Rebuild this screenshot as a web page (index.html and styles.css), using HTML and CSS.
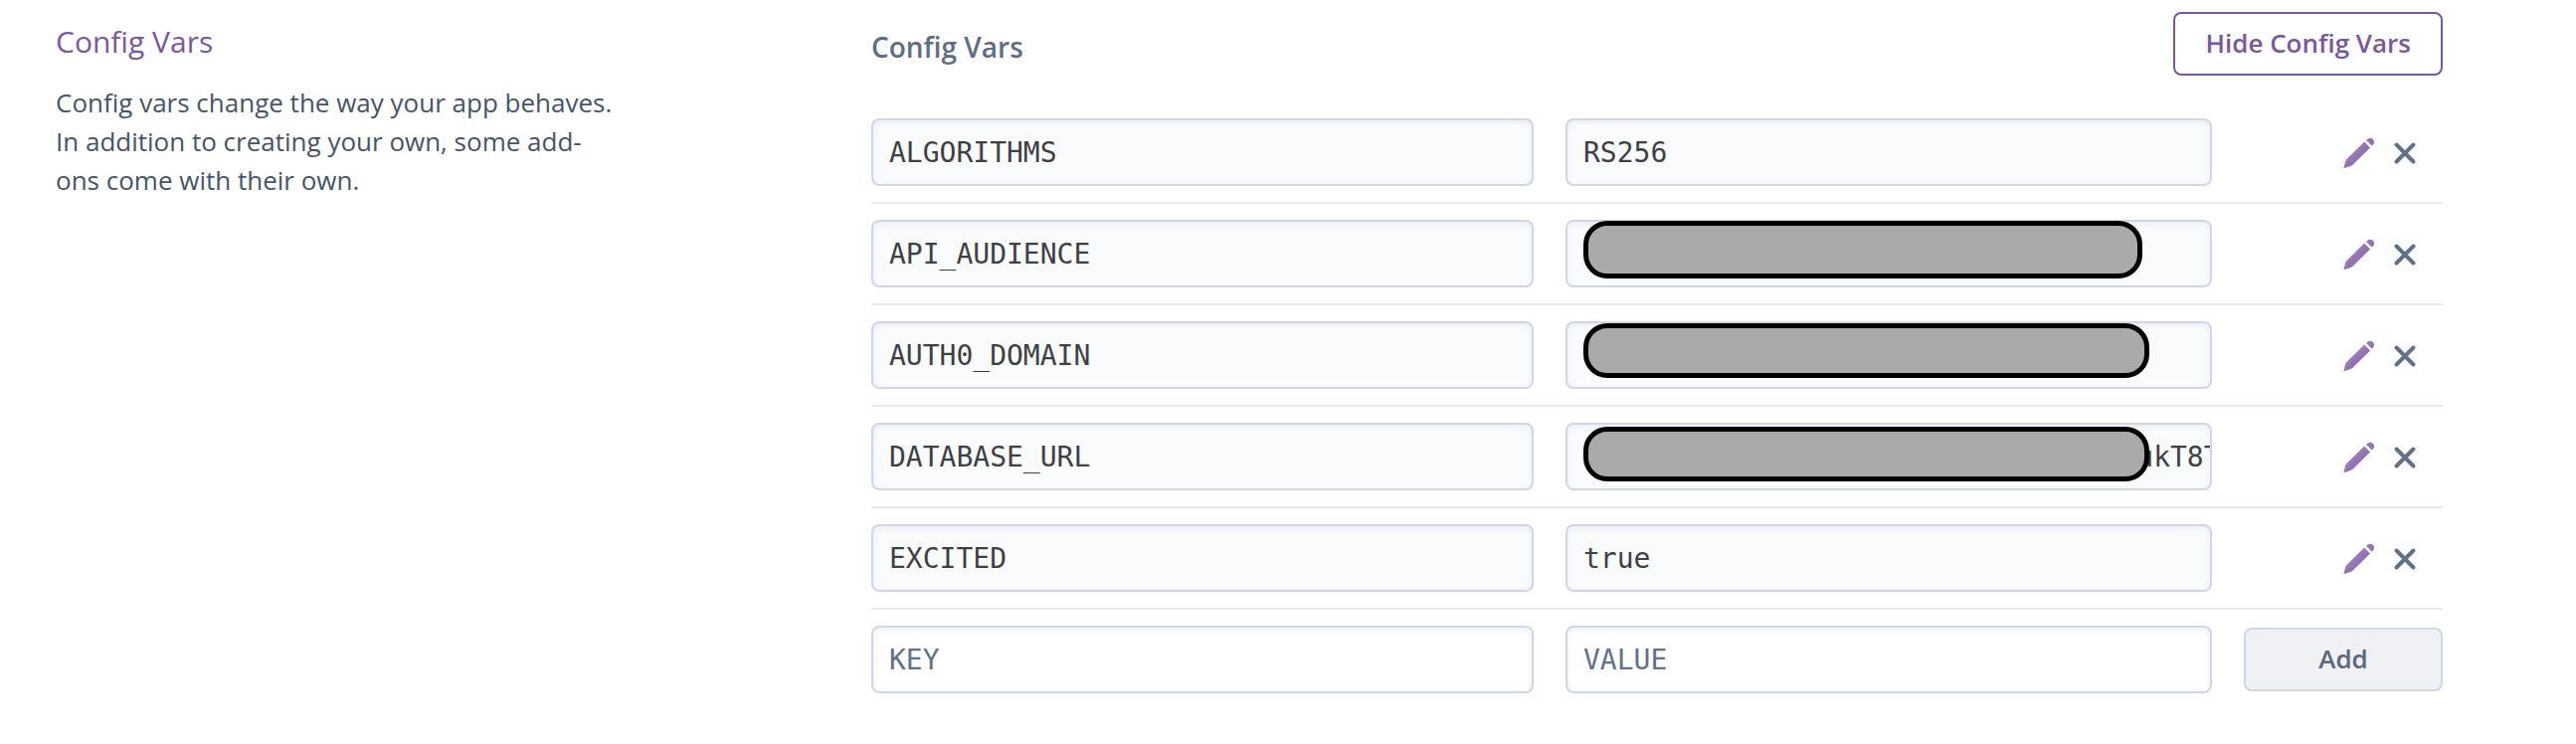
FILE: index.html
```html
<!DOCTYPE html>
<html lang="en">
<head>
<meta charset="utf-8">
<title>Config Vars</title>
<link rel="stylesheet" href="styles.css">
</head>
<body>
<svg class="defs" aria-hidden="true">
  <defs>
    <linearGradient id="pencil-fill" x1="0" y1="0" x2="1" y2="1">
      <stop offset="0.2" stop-color="#a48dc2"/>
      <stop offset="0.8" stop-color="#835ca6"/>
    </linearGradient>
    <symbol id="pencil" viewBox="0 0 32 32">
      <path fill="url(#pencil-fill)" d="M0.3 31.3 L2.600 22.800 L21.2 4.6 L27 10.400 L9.2 28 Q7.800 28.900 6 29.500Z M23 2.900 L25 1.200 Q27.600 -0.200 30 2 Q32 4.600 30.300 6.900 L28.700 8.600Z"/>
    </symbol>
    <symbol id="cross" viewBox="0 0 32 32">
      <path d="M7.500 7.500 L24.500 24.500 M24.500 7.500 L7.500 24.500" stroke="#62718a" stroke-width="4" stroke-linecap="round" fill="none"/>
    </symbol>
  </defs>
</svg>
<main class="page">
  <aside class="intro">
    <h1 class="intro-title">Config Vars</h1>
    <p class="intro-text">Config vars change the way your app behaves. In addition to creating your own, some add-ons come with their own.</p>
  </aside>
  <section class="vars">
    <header class="vars-header">
      <h2 class="vars-title">Config Vars</h2>
      <button class="button button-outline" type="button">Hide Config Vars</button>
    </header>
    <div class="row">
      <input class="field" type="text" aria-label="Key" value="ALGORITHMS" readonly>
      <div class="value"><input class="field" type="text" aria-label="Value" value="RS256" readonly></div>
      <div class="actions">
        <button class="icon-button" type="button" aria-label="Edit"><svg class="icon"><use href="#pencil"/></svg></button>
        <button class="icon-button" type="button" aria-label="Remove"><svg class="icon"><use href="#cross"/></svg></button>
      </div>
    </div>
    <div class="row">
      <input class="field" type="text" aria-label="Key" value="API_AUDIENCE" readonly>
      <div class="value"><input class="field" type="text" aria-label="Value" readonly><span class="mask mask-audience"></span></div>
      <div class="actions">
        <button class="icon-button" type="button" aria-label="Edit"><svg class="icon"><use href="#pencil"/></svg></button>
        <button class="icon-button" type="button" aria-label="Remove"><svg class="icon"><use href="#cross"/></svg></button>
      </div>
    </div>
    <div class="row">
      <input class="field" type="text" aria-label="Key" value="AUTH0_DOMAIN" readonly>
      <div class="value"><input class="field" type="text" aria-label="Value" readonly><span class="mask mask-domain"></span></div>
      <div class="actions">
        <button class="icon-button" type="button" aria-label="Edit"><svg class="icon"><use href="#pencil"/></svg></button>
        <button class="icon-button" type="button" aria-label="Remove"><svg class="icon"><use href="#cross"/></svg></button>
      </div>
    </div>
    <div class="row">
      <input class="field" type="text" aria-label="Key" value="DATABASE_URL" readonly>
      <div class="value"><input class="field" type="text" aria-label="Value" value="·································ukT8T" readonly><span class="mask mask-database"></span></div>
      <div class="actions">
        <button class="icon-button" type="button" aria-label="Edit"><svg class="icon"><use href="#pencil"/></svg></button>
        <button class="icon-button" type="button" aria-label="Remove"><svg class="icon"><use href="#cross"/></svg></button>
      </div>
    </div>
    <div class="row">
      <input class="field" type="text" aria-label="Key" value="EXCITED" readonly>
      <div class="value"><input class="field" type="text" aria-label="Value" value="true" readonly></div>
      <div class="actions">
        <button class="icon-button" type="button" aria-label="Edit"><svg class="icon"><use href="#pencil"/></svg></button>
        <button class="icon-button" type="button" aria-label="Remove"><svg class="icon"><use href="#cross"/></svg></button>
      </div>
    </div>
    <form class="row">
      <input class="field" type="text" aria-label="New key" placeholder="KEY">
      <div class="value"><input class="field" type="text" aria-label="New value" placeholder="VALUE"></div>
      <button class="button button-add" type="button">Add</button>
    </form>
  </section>
</main>
</body>
</html>
```
FILE: styles.css
```css
* {
  box-sizing: border-box;
}

body {
  margin: 0;
  background: #fff;
  color: #475468;
  font-family: "Open Sans", "Noto Sans", sans-serif;
  font-size: 26px;
}

.defs {
  position: absolute;
  width: 0;
  height: 0;
}

.page {
  display: grid;
  grid-template-columns: minmax(0, 820fr) minmax(0, 1580fr);
  padding: 12px 134px 36px 56px;
}

.intro {
  padding-top: 10px;
}

.intro-title {
  margin: 0 0 22px;
  color: #79589f;
  font-size: 30px;
  font-weight: 400;
  line-height: 40px;
}

.intro-text {
  max-width: 564px;
  margin: 0;
  line-height: 39px;
}

.vars-header {
  display: flex;
  align-items: center;
  justify-content: space-between;
  margin-bottom: 27px;
}

.vars-title {
  margin: 0;
  padding-top: 6px;
  color: #5e6d87;
  font-size: 28px;
  font-weight: 600;
  line-height: 40px;
}

.button {
  height: 64px;
  padding: 0 30px 2px;
  border: 2px solid;
  border-radius: 8px;
  font-family: inherit;
  font-size: 26px;
  font-weight: 600;
  line-height: 36px;
}

.button-outline {
  border-color: #79589f;
  background: #fff;
  color: #79589f;
}

.button-add {
  width: 100%;
  border-color: #cfd7e6;
  background: #eff1f5;
  color: #5a6880;
}

.row {
  display: grid;
  grid-template-columns: minmax(0, 666fr) minmax(0, 650fr) minmax(0, 200fr);
  align-items: center;
  gap: 32px;
  padding: 16px 0;
  border-bottom: 2px solid #e6eaf1;
}

.row:last-child {
  border-bottom: 0;
}

.value {
  position: relative;
}

.field {
  display: block;
  width: 100%;
  height: 68px;
  padding: 0 0 0 16px;
  border: 2px solid #cfd7e6;
  border-radius: 8px;
  outline: 0;
  background: #fff;
  box-shadow: inset 0 2px 6px #e9ecf3;
  color: #3f3f44;
  font-family: "DejaVu Sans Mono", monospace;
  font-size: 28px;
}

.field:read-only {
  background: #fafbfd;
}

.field::placeholder {
  color: #62718a;
  opacity: 1;
}

.mask {
  position: absolute;
  left: 18px;
  height: 55px;
  border: 5px solid #000;
  border-radius: 24px;
  background: #aaa;
}

.mask-audience {
  top: 1px;
  right: 70px;
  height: 58px;
}

.mask-domain {
  top: 2px;
  right: 63px;
}

.mask-database {
  top: 4px;
  right: 63px;
}

.actions {
  display: flex;
  justify-content: flex-end;
  gap: 14px;
  padding: 2px 22px 0 0;
}

.icon-button {
  padding: 0;
  border: 0;
  background: none;
}

.icon {
  display: block;
  width: 32px;
  height: 32px;
}
```
